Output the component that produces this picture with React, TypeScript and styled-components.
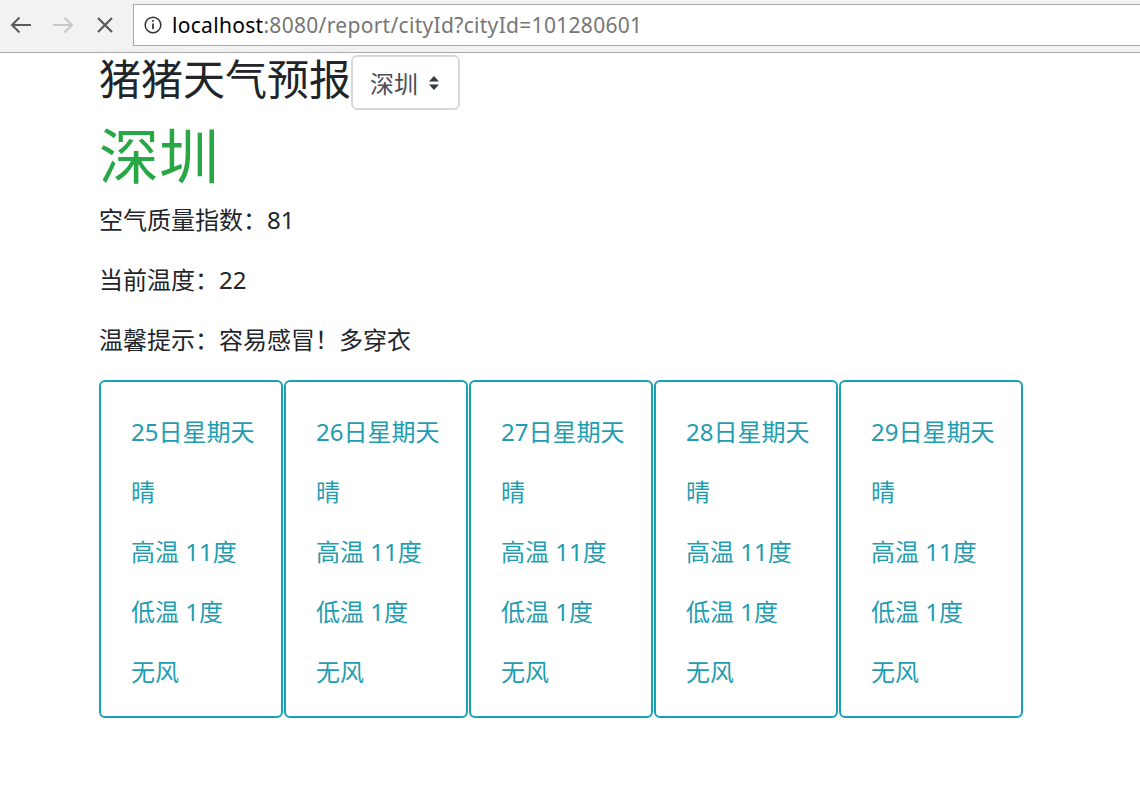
import React from 'react'
import styled, { createGlobalStyle } from 'styled-components'

const GlobalStyle = createGlobalStyle`
  * { box-sizing: border-box; }
  html, body { margin: 0; padding: 0; background: #fff; }
  body {
    font-family: "Noto Sans", "Noto Sans CJK SC", sans-serif;
    color: #212529;
  }
`

interface Forecast {
  date: string
  type: string
  high: string
  low: string
  wind: string
}

const forecasts: Forecast[] = [
  { date: '25日星期天', type: '晴', high: '高温 11度', low: '低温 1度', wind: '无风' },
  { date: '26日星期天', type: '晴', high: '高温 11度', low: '低温 1度', wind: '无风' },
  { date: '27日星期天', type: '晴', high: '高温 11度', low: '低温 1度', wind: '无风' },
  { date: '28日星期天', type: '晴', high: '高温 11度', low: '低温 1度', wind: '无风' },
  { date: '29日星期天', type: '晴', high: '高温 11度', low: '低温 1度', wind: '无风' },
]

function BackIcon({ color }: { color: string }) {
  return (
    <svg width="22" height="18" viewBox="0 0 22 18" fill="none" stroke={color} strokeWidth="2">
      <path d="M21 9H2M9.5 1.5L2 9l7.5 7.5" />
    </svg>
  )
}

function ForwardIcon({ color }: { color: string }) {
  return (
    <svg width="22" height="18" viewBox="0 0 22 18" fill="none" stroke={color} strokeWidth="2">
      <path d="M1 9h19M12.5 1.5L20 9l-7.5 7.5" />
    </svg>
  )
}

function StopIcon() {
  return (
    <svg width="18" height="18" viewBox="0 0 18 18" fill="none" stroke="#5a5a5a" strokeWidth="2.2">
      <path d="M2 2l14 14M16 2L2 16" />
    </svg>
  )
}

function InfoIcon() {
  return (
    <svg width="18" height="18" viewBox="0 0 18 18" fill="none" stroke="#333" strokeWidth="1.5">
      <circle cx="9" cy="9" r="7.8" />
      <path d="M9 7.6v5.4" strokeWidth="1.8" />
      <circle cx="9" cy="5" r="1" fill="#333" stroke="none" />
    </svg>
  )
}

function SelectArrows() {
  return (
    <svg width="12" height="16" viewBox="0 0 12 16" fill="#343a40">
      <path d="M6 1l5 5.5H1z" />
      <path d="M6 15L1 9.5h10z" />
    </svg>
  )
}

export default function App() {
  return (
    <>
      <GlobalStyle />
      <Toolbar>
        <NavButton><BackIcon color="#5a5a5a" /></NavButton>
        <NavButton><ForwardIcon color="#c8c8c8" /></NavButton>
        <NavButton><StopIcon /></NavButton>
        <AddressBar>
          <InfoIcon />
          <Url>
            <Host>localhost</Host>
            <Path>:8080/report/cityId?cityId=101280601</Path>
          </Url>
        </AddressBar>
      </Toolbar>

      <Page>
        <Header>
          <Title>猪猪天气预报</Title>
          <CitySelect>
            <span>深圳</span>
            <SelectArrows />
          </CitySelect>
        </Header>
        <CityName>深圳</CityName>

        <Info>
          <Line>空气质量指数：81</Line>
          <Line>当前温度：22</Line>
          <Line>温馨提示：容易感冒！多穿衣</Line>
        </Info>

        <CardRow>
          {forecasts.map((f) => (
            <Card key={f.date}>
              <CardLine>{f.date}</CardLine>
              <CardLine>{f.type}</CardLine>
              <CardLine>{f.high}</CardLine>
              <CardLine>{f.low}</CardLine>
              <CardLine>{f.wind}</CardLine>
            </Card>
          ))}
        </CardRow>
      </Page>
    </>
  )
}

const Toolbar = styled.header`
  height: 53px;
  background: #f2f2f2;
  border-bottom: 1px solid #a8a8a8;
  display: flex;
  align-items: flex-start;
  overflow: hidden;
`

const NavButton = styled.div`
  width: 42px;
  height: 50px;
  display: flex;
  align-items: center;
  justify-content: center;
`

const AddressBar = styled.div`
  margin-top: 4px;
  margin-left: 7px;
  flex: 1;
  height: 42px;
  background: #fff;
  border: 1px solid #a8a8a8;
  border-right: none;
  display: flex;
  align-items: center;
  padding-left: 10px;
  gap: 10px;
`

const Url = styled.div`
  font-family: "Noto Sans", sans-serif;
  font-size: 21px;
  letter-spacing: 0.3px;
`

const Host = styled.span`
  color: #000;
`

const Path = styled.span`
  color: #767676;
`

const Page = styled.main`
  padding-left: 99px;
`

const Header = styled.div`
  display: flex;
  align-items: flex-start;
  margin-bottom: 10px;
`

const Title = styled.h3`
  margin: 0;
  font-size: 42px;
  font-weight: 400;
  line-height: 52px;
`

const CitySelect = styled.div`
  margin-top: 2px;
  width: 109px;
  height: 55px;
  border: 2px solid #d6d9dc;
  border-radius: 6px;
  display: flex;
  align-items: center;
  justify-content: space-between;
  padding: 0 18px 0 17px;
  font-size: 24px;
  color: #495057;
`

const CityName = styled.h1`
  margin: 0 0 10px;
  font-size: 60px;
  font-weight: 400;
  line-height: 72px;
  color: #28a745;
`

const Info = styled.div`
  display: flex;
  flex-direction: column;
  gap: 24px;
  margin-bottom: 22px;
`

const Line = styled.p`
  margin: 0;
  font-size: 24px;
  line-height: 36px;
`

const CardRow = styled.div`
  display: flex;
  gap: 1px;
`

const Card = styled.div`
  width: 184px;
  border: 2px solid #17a2b8;
  border-radius: 6px;
  padding: 32px 0 26px 30px;
  display: flex;
  flex-direction: column;
  gap: 24px;
`

const CardLine = styled.p`
  margin: 0;
  font-size: 24px;
  line-height: 36px;
  color: #1f9db0;
  white-space: nowrap;
`
